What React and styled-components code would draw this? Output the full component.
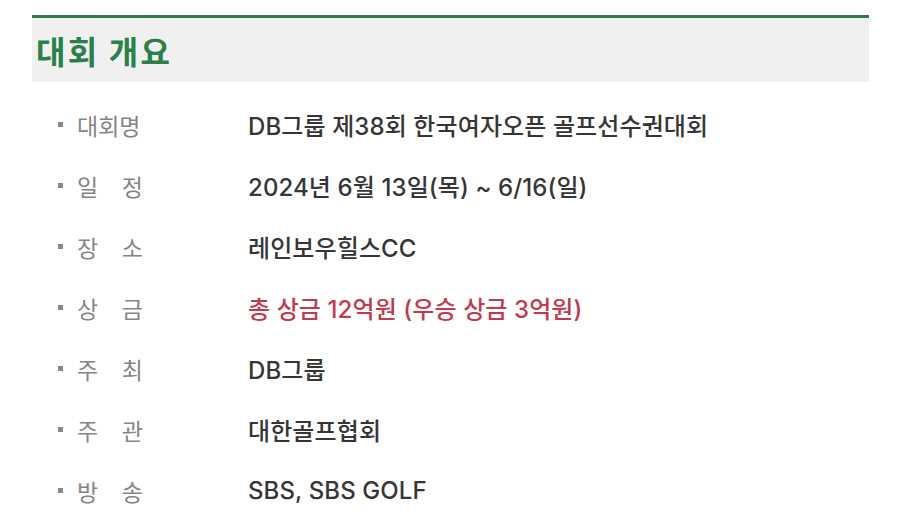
import React from "react";
import styled, { createGlobalStyle } from "styled-components";

const Global = createGlobalStyle`
  html, body {
    margin: 0;
    padding: 0;
    background: #ffffff;
    font-family: "Inter", "Noto Sans CJK KR", sans-serif;
  }
`;

const Section = styled.section`
  width: 837px;
  margin-left: 32px;
  padding-top: 15px;
`;

const Header = styled.div`
  border-top: 3px solid #2b7d4c;
  background: #f0f0f0;
  height: 64px;
  display: flex;
  align-items: center;
  padding-left: 4px;
`;

const Title = styled.h2`
  margin: 0;
  font-family: "Noto Sans CJK KR", sans-serif;
  font-size: 32px;
  font-weight: 700;
  color: #2b8049;
  letter-spacing: 2.2px;
`;

const List = styled.ul`
  list-style: none;
  margin: 0;
  padding: 12px 0 0 26px;
`;

const Row = styled.li`
  display: flex;
  align-items: center;
  height: 61px;
`;

const Bullet = styled.span`
  width: 5px;
  height: 5px;
  background: #888888;
  margin-right: 14px;
  flex-shrink: 0;
`;

const Label = styled.span`
  display: inline-block;
  width: 66px;
  margin-right: 105px;
  font-family: "Noto Sans CJK KR", sans-serif;
  font-size: 23px;
  color: #858585;
  text-align: justify;
  text-align-last: justify;
`;

const Value = styled.span`
  font-size: 24px;
  font-weight: 500;
  color: ${(p) => (p.$accent ? "#c23a4e" : "#363636")};
  letter-spacing: 0.1px;
`;

const rows = [
  ["대회명", "DB그룹 제38회 한국여자오픈 골프선수권대회"],
  ["일 정", "2024년 6월 13일(목) ~ 6/16(일)"],
  ["장 소", "레인보우힐스CC"],
  ["상 금", "총 상금 12억원 (우승 상금 3억원)", true],
  ["주 최", "DB그룹"],
  ["주 관", "대한골프협회"],
  ["방 송", "SBS, SBS GOLF"],
];

export default function App() {
  return (
    <>
      <Global />
      <Section>
        <Header>
          <Title>대회 개요</Title>
        </Header>
        <List>
          {rows.map(([label, value, accent]) => (
            <Row key={label}>
              <Bullet />
              <Label>{label}</Label>
              <Value $accent={accent}>{value}</Value>
            </Row>
          ))}
        </List>
      </Section>
    </>
  );
}
